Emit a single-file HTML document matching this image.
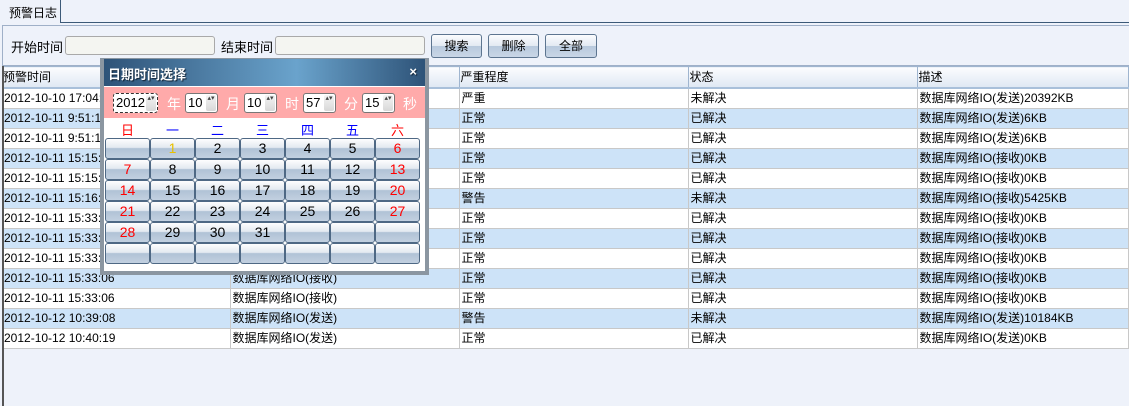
<!DOCTYPE html>
<html><head><meta charset="utf-8"><style>
*{box-sizing:border-box;margin:0;padding:0}
body{width:1129px;height:406px;overflow:hidden;background:#eef2fa;font-family:"Liberation Sans","Noto Sans CJK SC",sans-serif;font-size:12px;color:#000;position:relative}
.a{position:absolute}
.tabline{left:60px;top:22px;width:1069px;height:1px;background:#3c5a78}
.tab{left:0;top:0;width:61px;height:23px;border-right:1px solid #3c5a78;padding:4px 0 0 9px}
.tb{left:2px;top:25px;width:1127px;height:41px;border:1px solid #9fb0c8;border-right:none}
.inp{height:19px;border:1px solid #a9a9a9;border-radius:3px;background:#f4f5f1}
.btn{top:34px;height:24px;border:1px solid #5d7590;border-radius:3px;background:linear-gradient(#fbfcfe,#e2e9f2 50%,#b8c9dd 51%,#c9d6e6);text-align:center;line-height:22px}
table{position:absolute;left:2px;top:66px;border-collapse:collapse;width:1127px;table-layout:fixed}
td{height:20px;padding:0 0 0 2px;border-right:1px solid #c8c8c8;border-bottom:1px solid #c8c8c8;white-space:nowrap;overflow:hidden;line-height:19px}
th{height:21px;font-weight:normal;text-align:left;padding:0 0 0 1px;background:linear-gradient(#fbfcfe,#dfe8f3);border-right:1px solid #9fb5cf;border-bottom:2px solid #a9c0da;border-top:1px solid #9fb5cf}
tr.b td{background:#cde3f8}
tr.w td{background:#fff}
.lb{left:2px;top:66px;width:2px;height:340px;background:#555}
.pop{left:100px;top:58px;width:329px;height:217px;border:4px solid #8b96a1;border-top:1px solid #8b96a1;background:#fff}
.tt{left:0;top:0;width:321px;height:27px;background:linear-gradient(90deg,#2e5378,#6aa3cc 60%,#2e5378);color:#fff;font-weight:bold;font-size:13px;padding:5px 0 0 4px;text-shadow:1px 1px 1px #123}
.pk{left:0;top:28px;width:321px;height:31px;background:#ffaaaa;color:#fff;font-size:14px}
.sp{top:6px;height:20px;border:1px solid #777;border-radius:3px;background:#fff;color:#000;font-size:13px;padding:1px 0 0 2px}
.sp:after{content:"▴▾";position:absolute;right:1px;top:1px;width:10px;height:16px;background:linear-gradient(#f4f4f4,#d8d8d8);border-radius:2px;font-size:7px;line-height:8px;color:#444;text-align:center;white-space:normal;word-break:break-all}
.dh{top:61px;width:45px;text-align:center;color:#00f;font-size:13px}
.c{width:45px;height:21px;border:1px solid #4e6884;border-radius:3px;background:linear-gradient(#fdfdfe,#e3e9f0 45%,#b0c2d6 50%,#c2d0e0);text-align:center;line-height:19px;font-size:14px}
.r{color:#f00}
</style></head><body>
<div class="a tabline"></div>
<div class="a tab">预警日志</div>
<div class="a tb"></div>
<div class="a" style="left:11px;top:37px;font-size:13px">开始时间</div>
<div class="a inp" style="left:65px;top:36px;width:150px"></div>
<div class="a" style="left:221px;top:37px;font-size:13px">结束时间</div>
<div class="a inp" style="left:275px;top:36px;width:150px"></div>
<div class="a btn" style="left:431px;width:51px">搜索</div>
<div class="a btn" style="left:488px;width:51px">删除</div>
<div class="a btn" style="left:545px;width:52px">全部</div>
<table>
<colgroup><col style="width:228px"><col style="width:229px"><col style="width:229px"><col style="width:229px"><col></colgroup>
<tr><th>预警时间</th><th>预警类型</th><th>严重程度</th><th>状态</th><th>描述</th></tr>
<tr class="w"><td>2012-10-10 17:04:11</td><td>数据库网络IO(发送)</td><td>严重</td><td>未解决</td><td>数据库网络IO(发送)20392KB</td></tr>
<tr class="b"><td>2012-10-11 9:51:11</td><td>数据库网络IO(发送)</td><td>正常</td><td>已解决</td><td>数据库网络IO(发送)6KB</td></tr>
<tr class="w"><td>2012-10-11 9:51:11</td><td>数据库网络IO(发送)</td><td>正常</td><td>已解决</td><td>数据库网络IO(发送)6KB</td></tr>
<tr class="b"><td>2012-10-11 15:15:11</td><td>数据库网络IO(接收)</td><td>正常</td><td>已解决</td><td>数据库网络IO(接收)0KB</td></tr>
<tr class="w"><td>2012-10-11 15:15:11</td><td>数据库网络IO(接收)</td><td>正常</td><td>已解决</td><td>数据库网络IO(接收)0KB</td></tr>
<tr class="b"><td>2012-10-11 15:16:11</td><td>数据库网络IO(接收)</td><td>警告</td><td>未解决</td><td>数据库网络IO(接收)5425KB</td></tr>
<tr class="w"><td>2012-10-11 15:33:06</td><td>数据库网络IO(接收)</td><td>正常</td><td>已解决</td><td>数据库网络IO(接收)0KB</td></tr>
<tr class="b"><td>2012-10-11 15:33:06</td><td>数据库网络IO(接收)</td><td>正常</td><td>已解决</td><td>数据库网络IO(接收)0KB</td></tr>
<tr class="w"><td>2012-10-11 15:33:06</td><td>数据库网络IO(接收)</td><td>正常</td><td>已解决</td><td>数据库网络IO(接收)0KB</td></tr>
<tr class="b"><td>2012-10-11 15:33:06</td><td>数据库网络IO(接收)</td><td>正常</td><td>已解决</td><td>数据库网络IO(接收)0KB</td></tr>
<tr class="w"><td>2012-10-11 15:33:06</td><td>数据库网络IO(接收)</td><td>正常</td><td>已解决</td><td>数据库网络IO(接收)0KB</td></tr>
<tr class="b"><td>2012-10-12 10:39:08</td><td>数据库网络IO(发送)</td><td>警告</td><td>未解决</td><td>数据库网络IO(发送)10184KB</td></tr>
<tr class="w"><td>2012-10-12 10:40:19</td><td>数据库网络IO(发送)</td><td>正常</td><td>已解决</td><td>数据库网络IO(发送)0KB</td></tr>
</table>
<div class="a lb"></div>
<div class="a pop">
<div class="a tt">日期时间选择<span style="position:absolute;right:8px;top:5px;font-size:13px">×</span></div>
<div class="a pk">
<div class="a sp" style="left:9px;width:45px;border:1px dashed #333">2012</div><div class="a" style="left:63px;top:7px">年</div>
<div class="a sp" style="left:81px;width:33px">10</div><div class="a" style="left:122px;top:7px">月</div>
<div class="a sp" style="left:140px;width:33px">10</div><div class="a" style="left:181px;top:7px">时</div>
<div class="a sp" style="left:199px;width:33px">57</div><div class="a" style="left:240px;top:7px">分</div>
<div class="a sp" style="left:258px;width:33px">15</div><div class="a" style="left:299px;top:7px">秒</div>
</div>
<div class="a dh r" style="left:1px">日</div><div class="a dh" style="left:46px">一</div><div class="a dh" style="left:91px">二</div><div class="a dh" style="left:136px">三</div><div class="a dh" style="left:181px">四</div><div class="a dh" style="left:226px">五</div><div class="a dh r" style="left:271px">六</div>
<div class="a" style="left:1px;top:79px;width:320px">
<div style="display:grid;grid-template-columns:repeat(7,45px);grid-auto-rows:21px">
<div class="c"></div><div class="c" style="color:#e8c000">1</div><div class="c">2</div><div class="c">3</div><div class="c">4</div><div class="c">5</div><div class="c r">6</div>
<div class="c r">7</div><div class="c">8</div><div class="c">9</div><div class="c">10</div><div class="c">11</div><div class="c">12</div><div class="c r">13</div>
<div class="c r">14</div><div class="c">15</div><div class="c">16</div><div class="c">17</div><div class="c">18</div><div class="c">19</div><div class="c r">20</div>
<div class="c r">21</div><div class="c">22</div><div class="c">23</div><div class="c">24</div><div class="c">25</div><div class="c">26</div><div class="c r">27</div>
<div class="c r">28</div><div class="c">29</div><div class="c">30</div><div class="c">31</div><div class="c"></div><div class="c"></div><div class="c"></div>
<div class="c"></div><div class="c"></div><div class="c"></div><div class="c"></div><div class="c"></div><div class="c"></div><div class="c"></div>
</div></div>
</div>
</body></html>
